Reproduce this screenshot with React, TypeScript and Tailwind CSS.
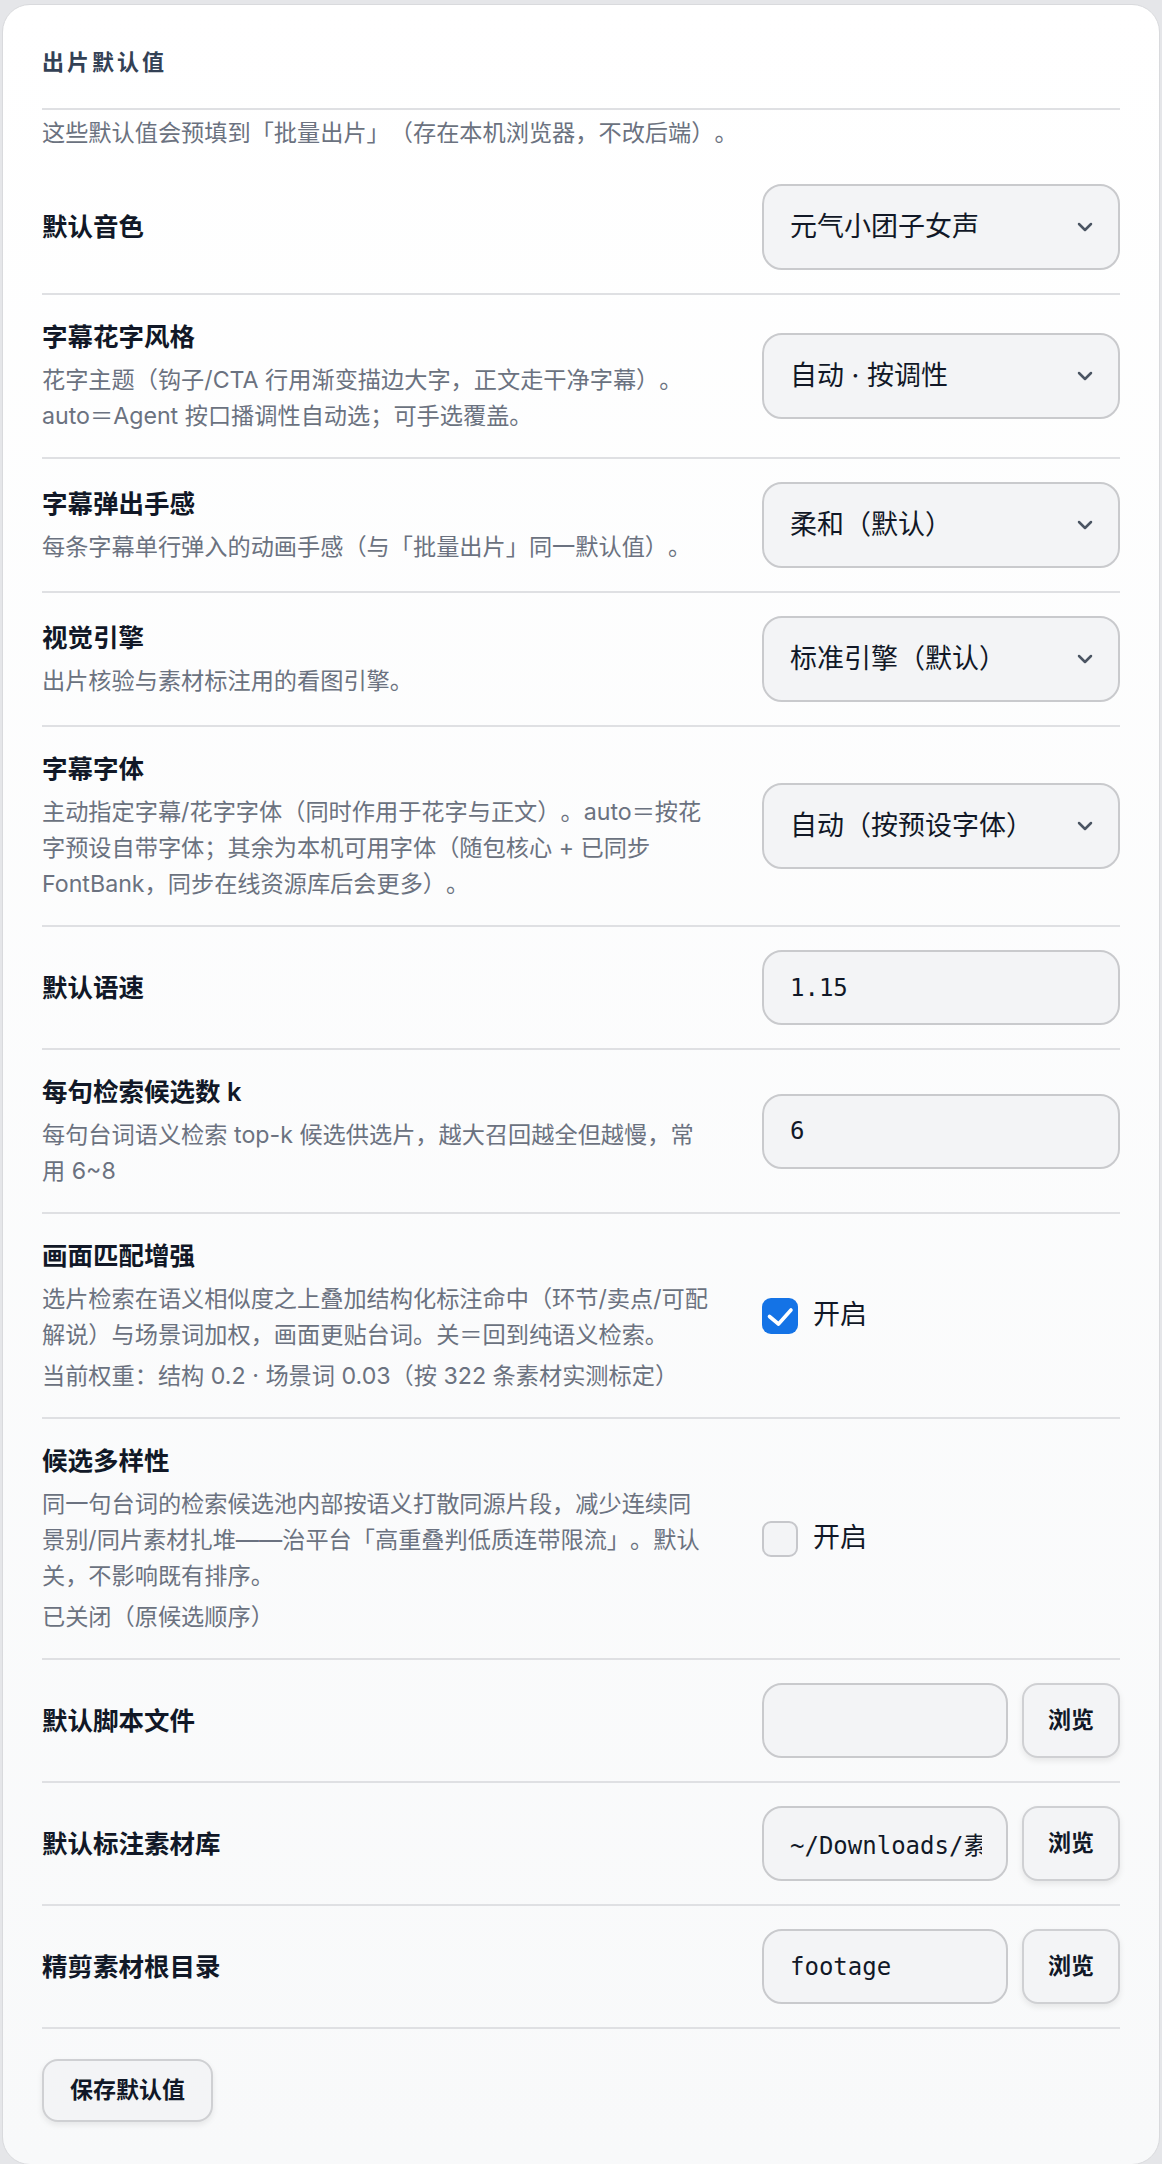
import { Fragment, type ReactNode } from "react";
import { ChevronDown } from "lucide-react";

type Field =
  | { kind: "select"; value: string }
  | { kind: "input"; value: string }
  | { kind: "check"; checked: boolean }
  | { kind: "path"; value: string };

type Setting = {
  label: string;
  // description lines, broken where the design breaks them
  desc?: string[];
  note?: string;
  field: Field;
};

const settings: Setting[] = [
  { label: "默认音色", field: { kind: "select", value: "元气小团子女声" } },
  {
    label: "字幕花字风格",
    desc: ["花字主题（钩子/CTA 行用渐变描边大字，正文走干净字幕）。", "auto＝Agent 按口播调性自动选；可手选覆盖。"],
    field: { kind: "select", value: "自动 · 按调性" },
  },
  {
    label: "字幕弹出手感",
    desc: ["每条字幕单行弹入的动画手感（与「批量出片」同一默认值）。"],
    field: { kind: "select", value: "柔和（默认）" },
  },
  {
    label: "视觉引擎",
    desc: ["出片核验与素材标注用的看图引擎。"],
    field: { kind: "select", value: "标准引擎（默认）" },
  },
  {
    label: "字幕字体",
    desc: [
      "主动指定字幕/花字字体（同时作用于花字与正文）。auto＝按花",
      "字预设自带字体；其余为本机可用字体（随包核心 + 已同步",
      "FontBank，同步在线资源库后会更多）。",
    ],
    field: { kind: "select", value: "自动（按预设字体）" },
  },
  { label: "默认语速", field: { kind: "input", value: "1.15" } },
  {
    label: "每句检索候选数 k",
    desc: ["每句台词语义检索 top-k 候选供选片，越大召回越全但越慢，常", "用 6~8"],
    field: { kind: "input", value: "6" },
  },
  {
    label: "画面匹配增强",
    desc: [
      "选片检索在语义相似度之上叠加结构化标注命中（环节/卖点/可配",
      "解说）与场景词加权，画面更贴台词。关＝回到纯语义检索。",
    ],
    note: "当前权重：结构 0.2 · 场景词 0.03（按 322 条素材实测标定）",
    field: { kind: "check", checked: true },
  },
  {
    label: "候选多样性",
    desc: [
      "同一句台词的检索候选池内部按语义打散同源片段，减少连续同",
      "景别/同片素材扎堆——治平台「高重叠判低质连带限流」。默认",
      "关，不影响既有排序。",
    ],
    note: "已关闭（原候选顺序）",
    field: { kind: "check", checked: false },
  },
  { label: "默认脚本文件", field: { kind: "path", value: "" } },
  { label: "默认标注素材库", field: { kind: "path", value: "~/Downloads/素材库" } },
  { label: "精剪素材根目录", field: { kind: "path", value: "footage" } },
];

function SelectBox({ value }: { value: string }) {
  return (
    <div className="relative">
      <select
        defaultValue={value}
        className="h-[86px] w-full appearance-none rounded-[20px] border-2 border-[#c9cacd] bg-[#f3f4f6] pl-[26px] pr-[60px] text-[27px] text-[#111827] outline-none"
      >
        <option>{value}</option>
      </select>
      <ChevronDown
        className="pointer-events-none absolute top-1/2 right-[23px] size-6 -translate-y-1/2 text-[#4b5563]"
        strokeWidth={2.5}
        aria-hidden
      />
    </div>
  );
}

function TextInput({ value, className }: { value: string; className?: string }) {
  return (
    <input
      defaultValue={value}
      className={
        "h-[75px] rounded-[20px] border-2 border-[#c9cacd] bg-[#f3f4f6] pl-[26px] pr-[24px] font-['DejaVu_Sans_Mono','Noto_Sans_CJK_SC',monospace] text-[24px] text-[#111827] outline-none " +
        (className ?? "w-full")
      }
    />
  );
}

function GhostButton({ children, className }: { children: ReactNode; className?: string }) {
  return (
    <button
      className={
        "rounded-[16px] border-2 border-[#cfd0d3] bg-[#f3f4f6] text-[23px] font-bold text-[#111827] shadow-[0_3px_6px_rgba(0,0,0,0.08)] " +
        (className ?? "")
      }
    >
      {children}
    </button>
  );
}

function Toggle({ checked }: { checked: boolean }) {
  return (
    <label className="flex items-center gap-[15px]">
      {checked ? (
        <span className="flex size-[36px] items-center justify-center rounded-[9px] bg-[#1473e6]">
          <svg viewBox="0 0 36 36" className="size-[36px]" aria-hidden>
            <path
              d="M7.5 18.5 L16.5 26 L29 12"
              fill="none"
              stroke="white"
              strokeWidth="3.6"
              strokeLinecap="round"
              strokeLinejoin="round"
            />
          </svg>
        </span>
      ) : (
        <span className="size-[36px] rounded-[9px] border-2 border-[#c6c7cb] bg-[#f3f4f6]" />
      )}
      <span className="text-[27px] text-[#111827]">开启</span>
    </label>
  );
}

function FieldControl({ field }: { field: Field }) {
  if (field.kind === "select") return <SelectBox value={field.value} />;
  if (field.kind === "input") return <TextInput value={field.value} />;
  if (field.kind === "check") return <Toggle checked={field.checked} />;
  return (
    <div className="flex gap-[14px]">
      <TextInput value={field.value} className="w-[246px]" />
      <GhostButton className="h-[75px] w-[98px]">浏览</GhostButton>
    </div>
  );
}

function SettingRow({ setting }: { setting: Setting }) {
  return (
    <div className="flex items-center gap-[40px] border-b-2 border-[#dfe0e3] py-[23px]">
      <div className="min-w-0 flex-1">
        <div className="text-[25.5px] leading-[38px] font-semibold text-[#111827]">{setting.label}</div>
        {setting.desc ? (
          <p className="mt-[6px] text-[23.2px] leading-[36px] text-[#6b7280]">
            {setting.desc.map((line, i) => (
              <Fragment key={i}>
                {i > 0 ? <br /> : null}
                {line}
              </Fragment>
            ))}
          </p>
        ) : null}
        {setting.note ? (
          <p className="mt-[5px] text-[23.2px] leading-[36px] text-[#6b7280]">{setting.note}</p>
        ) : null}
      </div>
      <div className="w-[358px] shrink-0">
        <FieldControl field={setting.field} />
      </div>
    </div>
  );
}

export default function App() {
  return (
    <div className="min-h-screen bg-[#e5e6e9] px-[2px] pt-[4px] pb-[2px] font-['Inter','Noto_Sans_CJK_SC',sans-serif] [text-spacing-trim:space-all]">
      <section className="rounded-[28px] border border-[#d9dadd] bg-gradient-to-b from-white to-[#f8f9fa] px-[39px] pt-[39px] pb-[42px]">
        <h2 className="border-b-2 border-[#dfe0e3] pb-[28px] text-[22px] leading-[36px] font-semibold tracking-[3px] text-[#334155]">
          出片默认值
        </h2>
        <p className="mt-[5px] mb-[10px] text-[23.2px] leading-[36px] text-[#6b7280]">
          这些默认值会预填到「批量出片」（存在本机浏览器，不改后端）。
        </p>
        <div>
          {settings.map((s) => (
            <SettingRow key={s.label} setting={s} />
          ))}
        </div>
        <div className="pt-[30px]">
          <GhostButton className="h-[63px] rounded-[15px] px-[26px]">保存默认值</GhostButton>
        </div>
      </section>
    </div>
  );
}
